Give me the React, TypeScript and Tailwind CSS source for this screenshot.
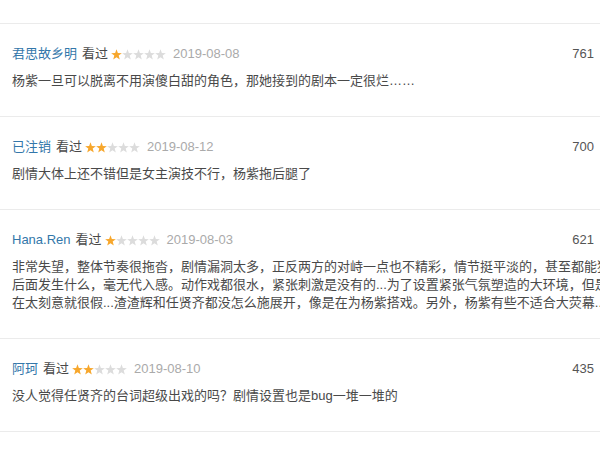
import { Fragment } from 'react';

type Comment = {
  id: number;
  name: string;
  rating: number;
  date: string;
  votes: number;
  lines: string[];
};

const comments: Comment[] = [
  {
    id: 0,
    name: '君思故乡明',
    rating: 1,
    date: '2019-08-08',
    votes: 761,
    lines: ['杨紫一旦可以脱离不用演傻白甜的角色，那她接到的剧本一定很烂……'],
  },
  {
    id: 1,
    name: '已注销',
    rating: 2,
    date: '2019-08-12',
    votes: 700,
    lines: ['剧情大体上还不错但是女主演技不行，杨紫拖后腿了'],
  },
  {
    id: 2,
    name: 'Hana.Ren',
    rating: 1,
    date: '2019-08-03',
    votes: 621,
    lines: [
      '非常失望，整体节奏很拖沓，剧情漏洞太多，正反两方的对峙一点也不精彩，情节挺平淡的，甚至都能猜到',
      '后面发生什么，毫无代入感。动作戏都很水，紧张刺激是没有的...为了设置紧张气氛塑造的大环境，但是实',
      '在太刻意就很假...渣渣辉和任贤齐都没怎么施展开，像是在为杨紫搭戏。另外，杨紫有些不适合大荧幕...',
    ],
  },
  {
    id: 3,
    name: '阿珂',
    rating: 2,
    date: '2019-08-10',
    votes: 435,
    lines: ['没人觉得任贤齐的台词超级出戏的吗？剧情设置也是bug一堆一堆的'],
  },
];

const STAR =
  'M5.5 0.3 6.85 4.04 10.83 4.17 7.69 6.61 8.79 10.43 5.5 8.2 2.21 10.43 3.31 6.61 0.17 4.17 4.15 4.04Z';

function Stars({ rating }: { rating: number }) {
  return (
    <svg width="55" height="11" viewBox="0 0 55 11" className="ml-[3px]">
      {[0, 1, 2, 3, 4].map(i => (
        <path
          key={i}
          d={STAR}
          transform={`translate(${i * 11} 0)`}
          fill={i < rating ? '#f7a72c' : '#dcdcdc'}
        />
      ))}
    </svg>
  );
}

export default function App() {
  return (
    <div className="w-[600px] h-[450px] overflow-hidden bg-white font-['Liberation_Sans','Noto_Sans_CJK_SC',sans-serif] text-[13px]">
      <div className="w-[640px] pt-[23px]">
        <div className="border-t border-[#ebebeb]">
          {comments.map(c => (
            <div key={c.id} className="border-b border-[#ebebeb] pl-3 pr-[14px] pt-5 pb-[26px]">
              <div className="flex items-center h-5 whitespace-nowrap">
                <span className="text-[#3377aa]">{c.name}</span>
                <span className="ml-[5px] text-[#494949]">看过</span>
                <Stars rating={c.rating} />
                <span className="ml-[7px] text-[#aaaaaa]">{c.date}</span>
                <span className="ml-auto text-[#555555]">{c.votes}</span>
                <span className="ml-[6px] text-[#3377aa]">有用</span>
              </div>
              <p className="mt-2 leading-[18px] text-[#494949] whitespace-nowrap">
                {c.lines.map((line, i) => (
                  <Fragment key={i}>
                    {i > 0 && <br />}
                    {line}
                  </Fragment>
                ))}
              </p>
            </div>
          ))}
        </div>
      </div>
    </div>
  );
}
